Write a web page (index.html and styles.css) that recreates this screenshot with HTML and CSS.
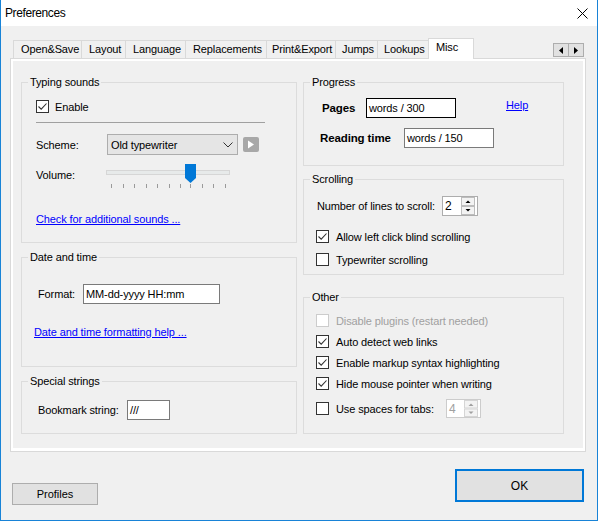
FILE: index.html
```html
<!DOCTYPE html>
<html>
<head>
<meta charset="utf-8">
<link rel="stylesheet" href="styles.css">
</head>
<body>
<div class="window">
  <div class="titlebar">
    <span class="title">Preferences</span>
    <svg class="close" width="11" height="11" viewBox="0 0 11 11"><path d="M0.5 0.5L10.5 10.5M10.5 0.5L0.5 10.5" stroke="#000" stroke-width="1"/></svg>
  </div>
  <div class="tabstrip">
    <div class="tab t1">Open&amp;Save</div>
    <div class="tab t2">Layout</div>
    <div class="tab t3">Language</div>
    <div class="tab t4">Replacements</div>
    <div class="tab t5">Print&amp;Export</div>
    <div class="tab t6">Jumps</div>
    <div class="tab t7">Lookups</div>
    <div class="tab active">Misc</div>
    <div class="tabscroll">
      <span class="sbtn"><svg width="4" height="7" viewBox="0 0 4 7"><path d="M4 0L0 3.5L4 7Z" fill="#000"/></svg></span>
      <span class="sbtn"><svg width="4" height="7" viewBox="0 0 4 7"><path d="M0 0L4 3.5L0 7Z" fill="#000"/></svg></span>
    </div>
  </div>
  <div class="page">
    <div class="panel">
      <div class="col">
        <div class="group g-typing">
          <div class="gtitle">Typing sounds</div>
          <div class="check c-enable"><span class="box"><svg width="11" height="11" viewBox="0 0 11 11"><path d="M1.5 5.5L4.2 8.2L9.5 2.5" fill="none" stroke="#333" stroke-width="1.1"/></svg></span><span>Enable</span></div>
          <div class="sep"></div>
          <div class="row r-scheme">
            <span class="lbl w71">Scheme:</span>
            <div class="combo"><span>Old typewriter</span><svg width="10" height="6" viewBox="0 0 10 6"><path d="M0.5 0.5L5 5L9.5 0.5" fill="none" stroke="#333" stroke-width="1"/></svg></div>
            <span class="play"><svg width="16" height="15" viewBox="0 0 16 15"><path d="M5 3.5L11 7.5L5 11.5Z" fill="#fff"/></svg></span>
          </div>
          <div class="row r-volume">
            <span class="lbl w70 vol">Volume:</span>
            <svg class="slider" width="125" height="25" viewBox="0 0 125 25">
              <rect x="0.5" y="6.5" width="123" height="4" fill="#e7eaea" stroke="#d6d6d6"/>
              <path d="M5.5 20v4M17.5 20v4M28.5 20v4M40.5 20v4M51.5 20v4M63.5 20v4M74.5 20v4M84.5 20v4M96.5 20v4M107.5 20v4M119.5 20v4" stroke="#9a9a9a" stroke-width="1"/>
              <path d="M79 0H90V14L84.5 19L79 14Z" fill="#0078d7"/>
            </svg>
          </div>
          <a class="link l-sounds" href="#">Check for additional sounds ...</a>
        </div>
        <div class="group g-date">
          <div class="gtitle">Date and time</div>
          <div class="row r-format">
            <span class="lbl w45">Format:</span>
            <div class="tb w137">MM-dd-yyyy HH:mm</div>
          </div>
          <a class="link l-date" href="#">Date and time formatting help ...</a>
        </div>
        <div class="group g-special">
          <div class="gtitle">Special strings</div>
          <div class="row r-bookmark">
            <span class="lbl w89">Bookmark string:</span>
            <div class="tb w43">///</div>
          </div>
        </div>
      </div>
      <div class="col">
        <div class="group g-progress">
          <div class="gtitle">Progress</div>
          <div class="row r-pages">
            <span class="lbl bold w44">Pages</span>
            <div class="tb w90 dark">words / 300</div>
            <a class="link help" href="#">Help</a>
          </div>
          <div class="row r-reading">
            <span class="lbl bold w84">Reading time</span>
            <div class="tb w90">words / 150</div>
          </div>
        </div>
        <div class="group g-scrolling">
          <div class="gtitle">Scrolling</div>
          <div class="row r-lines">
            <span class="lbl w125">Number of lines to scroll:</span>
            <div class="spin"><span class="val">2</span>
              <svg width="15" height="18" viewBox="0 0 15 18"><rect x="0.5" y="0.5" width="13" height="8" fill="#f3f3f3" stroke="#bdbdbd"/><rect x="0.5" y="9.5" width="13" height="8" fill="#f3f3f3" stroke="#bdbdbd"/><path d="M4.5 6H9.5L7 3.5Z" fill="#000"/><path d="M4.5 12H9.5L7 14.5Z" fill="#000"/></svg>
            </div>
          </div>
          <div class="check rc c-allow"><span class="box"><svg width="11" height="11" viewBox="0 0 11 11"><path d="M1.5 5.5L4.2 8.2L9.5 2.5" fill="none" stroke="#333" stroke-width="1.1"/></svg></span><span>Allow left click blind scrolling</span></div>
          <div class="check rc c-next"><span class="box"></span><span>Typewriter scrolling</span></div>
        </div>
        <div class="group g-other">
          <div class="gtitle">Other</div>
          <div class="check rc c-first dis"><span class="box"></span><span>Disable plugins (restart needed)</span></div>
          <div class="check rc c-other"><span class="box"><svg width="11" height="11" viewBox="0 0 11 11"><path d="M1.5 5.5L4.2 8.2L9.5 2.5" fill="none" stroke="#333" stroke-width="1.1"/></svg></span><span>Auto detect web links</span></div>
          <div class="check rc c-other"><span class="box"><svg width="11" height="11" viewBox="0 0 11 11"><path d="M1.5 5.5L4.2 8.2L9.5 2.5" fill="none" stroke="#333" stroke-width="1.1"/></svg></span><span>Enable markup syntax highlighting</span></div>
          <div class="check rc c-other"><span class="box"><svg width="11" height="11" viewBox="0 0 11 11"><path d="M1.5 5.5L4.2 8.2L9.5 2.5" fill="none" stroke="#333" stroke-width="1.1"/></svg></span><span>Hide mouse pointer when writing</span></div>
          <div class="check rc c-tabs"><span class="box"></span><span class="w103">Use spaces for tabs:</span>
            <div class="spin spin-dis"><span class="val">4</span>
              <svg width="15" height="17" viewBox="0 0 15 17"><rect x="0.5" y="0.5" width="13" height="7.5" fill="#f3f3f3" stroke="#d5d5d5"/><rect x="0.5" y="9" width="13" height="7.5" fill="#f3f3f3" stroke="#d5d5d5"/><path d="M4.5 6H9.5L7 3.5Z" fill="#a0a0a0"/><path d="M4.5 11.5H9.5L7 14Z" fill="#a0a0a0"/></svg>
            </div>
          </div>
        </div>
      </div>
    </div>
  </div>
  <div class="footer">
    <button class="btn profiles">Profiles</button>
    <button class="btn ok">OK</button>
  </div>
</div>
</body>
</html>
```
FILE: styles.css
```css
html, body {
  margin: 0;
  padding: 0;
}
body {
  font-family: "Liberation Sans", Arial, sans-serif;
  font-size: 11px;
  letter-spacing: -0.12px;
  color: #000;
  background: #fff;
}
.window {
  width: 598px;
  height: 521px;
  box-sizing: border-box;
  border: 1px solid #1883d7;
  border-top: none;
  background: #f0f0f0;
  display: flex;
  flex-direction: column;
}
.titlebar {
  flex: none;
  height: 26px;
  background: #fff;
  display: flex;
  align-items: center;
  justify-content: space-between;
  padding: 0 9px 0 4px;
}
.title {
  font-size: 12px;
  letter-spacing: -0.4px;
}
.tabstrip {
  flex: none;
  margin-top: 12px;
  height: 20px;
  display: flex;
  align-items: flex-end;
  padding: 0 13px 0 12px;
  position: relative;
  z-index: 1;
}
.tab {
  height: 18px;
  box-sizing: border-box;
  border: 1px solid #d9d9d9;
  border-bottom: none;
  border-right: none;
  padding-left: 6px;
  line-height: 17px;
  white-space: nowrap;
  overflow: hidden;
}
.t1 { width: 68px; padding-left: 7px; }
.t2 { width: 44px; padding-left: 7px; }
.t3 { width: 60px; padding-left: 7px; }
.t4 { width: 81px; padding-left: 7px; }
.t5 { width: 69px; padding-left: 5px; }
.t6 { width: 42px; }
.t7 { width: 51px; }
.tab.active {
  width: 46px;
  height: 21px;
  margin-bottom: -1px;
  background: #fff;
  border-right: 1px solid #d9d9d9;
  padding-left: 7px;
  padding-top: 1px;
  line-height: 14px;
}
.tabscroll {
  margin-left: auto;
  align-self: flex-start;
  margin-top: 5px;
  display: flex;
}
.sbtn {
  width: 16px;
  height: 14px;
  box-sizing: border-box;
  border: 1px solid #adadad;
  background: #e1e1e1;
  display: flex;
  align-items: center;
  justify-content: center;
}
.sbtn + .sbtn {
  border-left: none;
  width: 15px;
}
.page {
  flex: none;
  margin: 0 11px 0 9px;
  height: 394px;
  box-sizing: border-box;
  border: 1px solid #d9d9d9;
  background: #fff;
  padding: 2px 2px 3px 2px;
}
.panel {
  height: 100%;
  background: #f0f0f0;
  display: grid;
  grid-template-columns: 276px 261px;
  column-gap: 6px;
  padding-left: 8px;
  align-items: start;
}
.col {
  display: flex;
  flex-direction: column;
  padding-top: 21px;
}
.group {
  border: 1px solid #dcdcdc;
  box-sizing: border-box;
}
.gtitle {
  display: table;
  margin: -8px 0 0 6px;
  padding: 0 2px;
  background: #f0f0f0;
  line-height: 14px;
}
.g-typing { height: 161px; }
.g-date { height: 110px; margin-top: 14px; }
.g-special { height: 53px; margin-top: 14px; }
.g-progress { height: 84px; }
.g-scrolling { height: 96px; margin-top: 13px; }
.g-other { height: 137px; margin-top: 22px; }

.check {
  display: flex;
  align-items: center;
  gap: 6px;
  height: 13px;
  line-height: 14px;
}
.check.rc { gap: 7px; padding-left: 12px; }
.box {
  flex: none;
  width: 13px;
  height: 13px;
  box-sizing: border-box;
  border: 1px solid #333;
  background: #fff;
  display: flex;
}
.check.dis { color: #a0a0a0; }
.check.dis .box { border-color: #cccccc; }
.c-enable { margin-top: 11px; padding-left: 14px; }
.sep {
  margin: 9px 0 0 14px;
  width: 229px;
  height: 1px;
  background: #a0a0a0;
}
.row {
  display: flex;
  align-items: center;
  line-height: 14px;
}
.lbl { flex: none; white-space: nowrap; }
.bold { font-weight: bold; font-size: 11.5px; }
.w44 { width: 44px; }
.w45 { width: 45px; }
.w70 { width: 70px; }
.w71 { width: 71px; }
.w84 { width: 84px; }
.w89 { width: 89px; }
.w103 { width: 103px; flex: none; }
.w125 { width: 125px; }
.r-scheme { margin-top: 11px; height: 21px; padding-left: 14px; }
.combo {
  width: 131px;
  height: 21px;
  box-sizing: border-box;
  border: 1px solid #adadad;
  background: #e5e5e5;
  display: flex;
  align-items: center;
  justify-content: space-between;
  padding: 0 4px 0 3px;
}
.play {
  margin-left: 5px;
  width: 16px;
  height: 15px;
  background: #a8a8a8;
  border-radius: 2px;
  display: flex;
}
.r-volume {
  margin-top: 9px;
  height: 25px;
  padding-left: 14px;
  align-items: flex-start;
}
.vol { padding-top: 4px; }
.slider { display: block; }
.link {
  display: block;
  color: #0000ff;
  text-decoration: underline;
  line-height: 14px;
  width: max-content;
}
.l-sounds { margin: 23px 0 0 14px; }
.tb {
  height: 20px;
  box-sizing: border-box;
  border: 1px solid #7a7a7a;
  background: #fff;
  padding-left: 2px;
  line-height: 18px;
  white-space: nowrap;
}
.tb.dark { border-color: #000; }
.w137 { width: 137px; }
.w43 { width: 43px; }
.w90 { width: 90px; }
.r-format { margin-top: 20px; height: 20px; padding-left: 16px; }
.l-date { margin: 21px 0 0 12px; }
.r-bookmark { margin-top: 12px; height: 20px; padding-left: 16px; }
.r-pages { margin-top: 9px; height: 20px; padding-left: 18px; }
.help { align-self: flex-start; margin-left: 50px; }
.r-reading { margin-top: 10px; height: 20px; padding-left: 16px; }
.r-lines { margin-top: 10px; height: 20px; padding-left: 13px; }
.spin {
  width: 36px;
  height: 20px;
  box-sizing: border-box;
  border: 1px solid #adadad;
  background: #fff;
  display: flex;
  align-items: center;
  justify-content: space-between;
  padding-right: 1px;
  padding-left: 2px;
  font-size: 12px;
}
.spin-dis {
  width: 35px;
  height: 19px;
  border-color: #cccccc;
  color: #a0a0a0;
}
.c-allow { margin-top: 14px; }
.c-next { margin-top: 10px; }
.c-first { margin-top: 10px; }
.c-other { margin-top: 8px; }
.c-tabs { margin-top: 9px; height: 19px; }
.footer {
  flex: none;
  display: flex;
  justify-content: space-between;
  align-items: flex-start;
  padding: 0 13px 0 11px;
}
.btn {
  font-family: inherit;
  font-size: 11px;
  color: #000;
  background: #e1e1e1;
  border: 1px solid #adadad;
  padding: 0;
  margin: 0;
  box-sizing: border-box;
}
.profiles {
  margin-top: 31px;
  width: 86px;
  height: 22px;
}
.ok {
  margin-top: 17px;
  width: 129px;
  height: 33px;
  border: 2px solid #0078d7;
  font-size: 12px;
}
```
